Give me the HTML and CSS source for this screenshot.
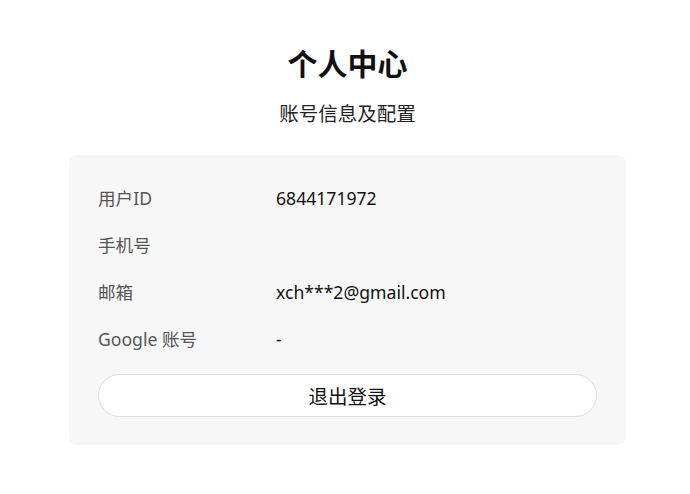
FILE: index.html
```html
<!DOCTYPE html>
<html lang="zh">
<head>
<meta charset="utf-8">
<link rel="stylesheet" href="styles.css">
</head>
<body>
<div class="page">
  <h1 class="title">个人中心</h1>
  <p class="subtitle">账号信息及配置</p>
  <div class="card">
    <div class="row"><span class="label">用户ID</span><span class="value">6844171972</span></div>
    <div class="row"><span class="label">手机号</span><span class="value"></span></div>
    <div class="row"><span class="label">邮箱</span><span class="value">xch***2@gmail.com</span></div>
    <div class="row"><span class="label">Google 账号</span><span class="value">-</span></div>
    <button class="logout">退出登录</button>
  </div>
</div>
</body>
</html>
```
FILE: styles.css
```css
html, body {
  margin: 0;
  padding: 0;
  background: #fff;
}
body {
  font-family: "Noto Sans", "Noto Sans CJK SC", sans-serif;
  color: #111;
  padding-left: 5px;
}
.page {
  width: 557px;
  margin: 0 auto;
  padding-top: 44px;
  display: flex;
  flex-direction: column;
  align-items: center;
}
.title {
  margin: 0;
  font-size: 30px;
  line-height: 40px;
  font-weight: 700;
  color: #111;
}
.subtitle {
  margin: 16px 0 0;
  font-size: 19.5px;
  line-height: 28px;
  color: #222;
}
.card {
  margin-top: 27px;
  width: 100%;
  box-sizing: border-box;
  background: #f7f7f7;
  border-radius: 8px;
  padding: 19px 29px 28px;
  display: flex;
  flex-direction: column;
}
.row {
  height: 47px;
  display: flex;
  align-items: center;
  font-size: 17.6px;
}
.label {
  width: 178px;
  color: #555;
}
.value {
  color: #111;
}
.logout {
  margin-top: 12px;
  height: 43px;
  border: 1px solid #dcdcdc;
  border-radius: 22px;
  background: #fff;
  font-family: "Noto Sans", "Noto Sans CJK SC", sans-serif;
  font-size: 19.5px;
  color: #111;
  padding: 0;
  cursor: pointer;
}
```
